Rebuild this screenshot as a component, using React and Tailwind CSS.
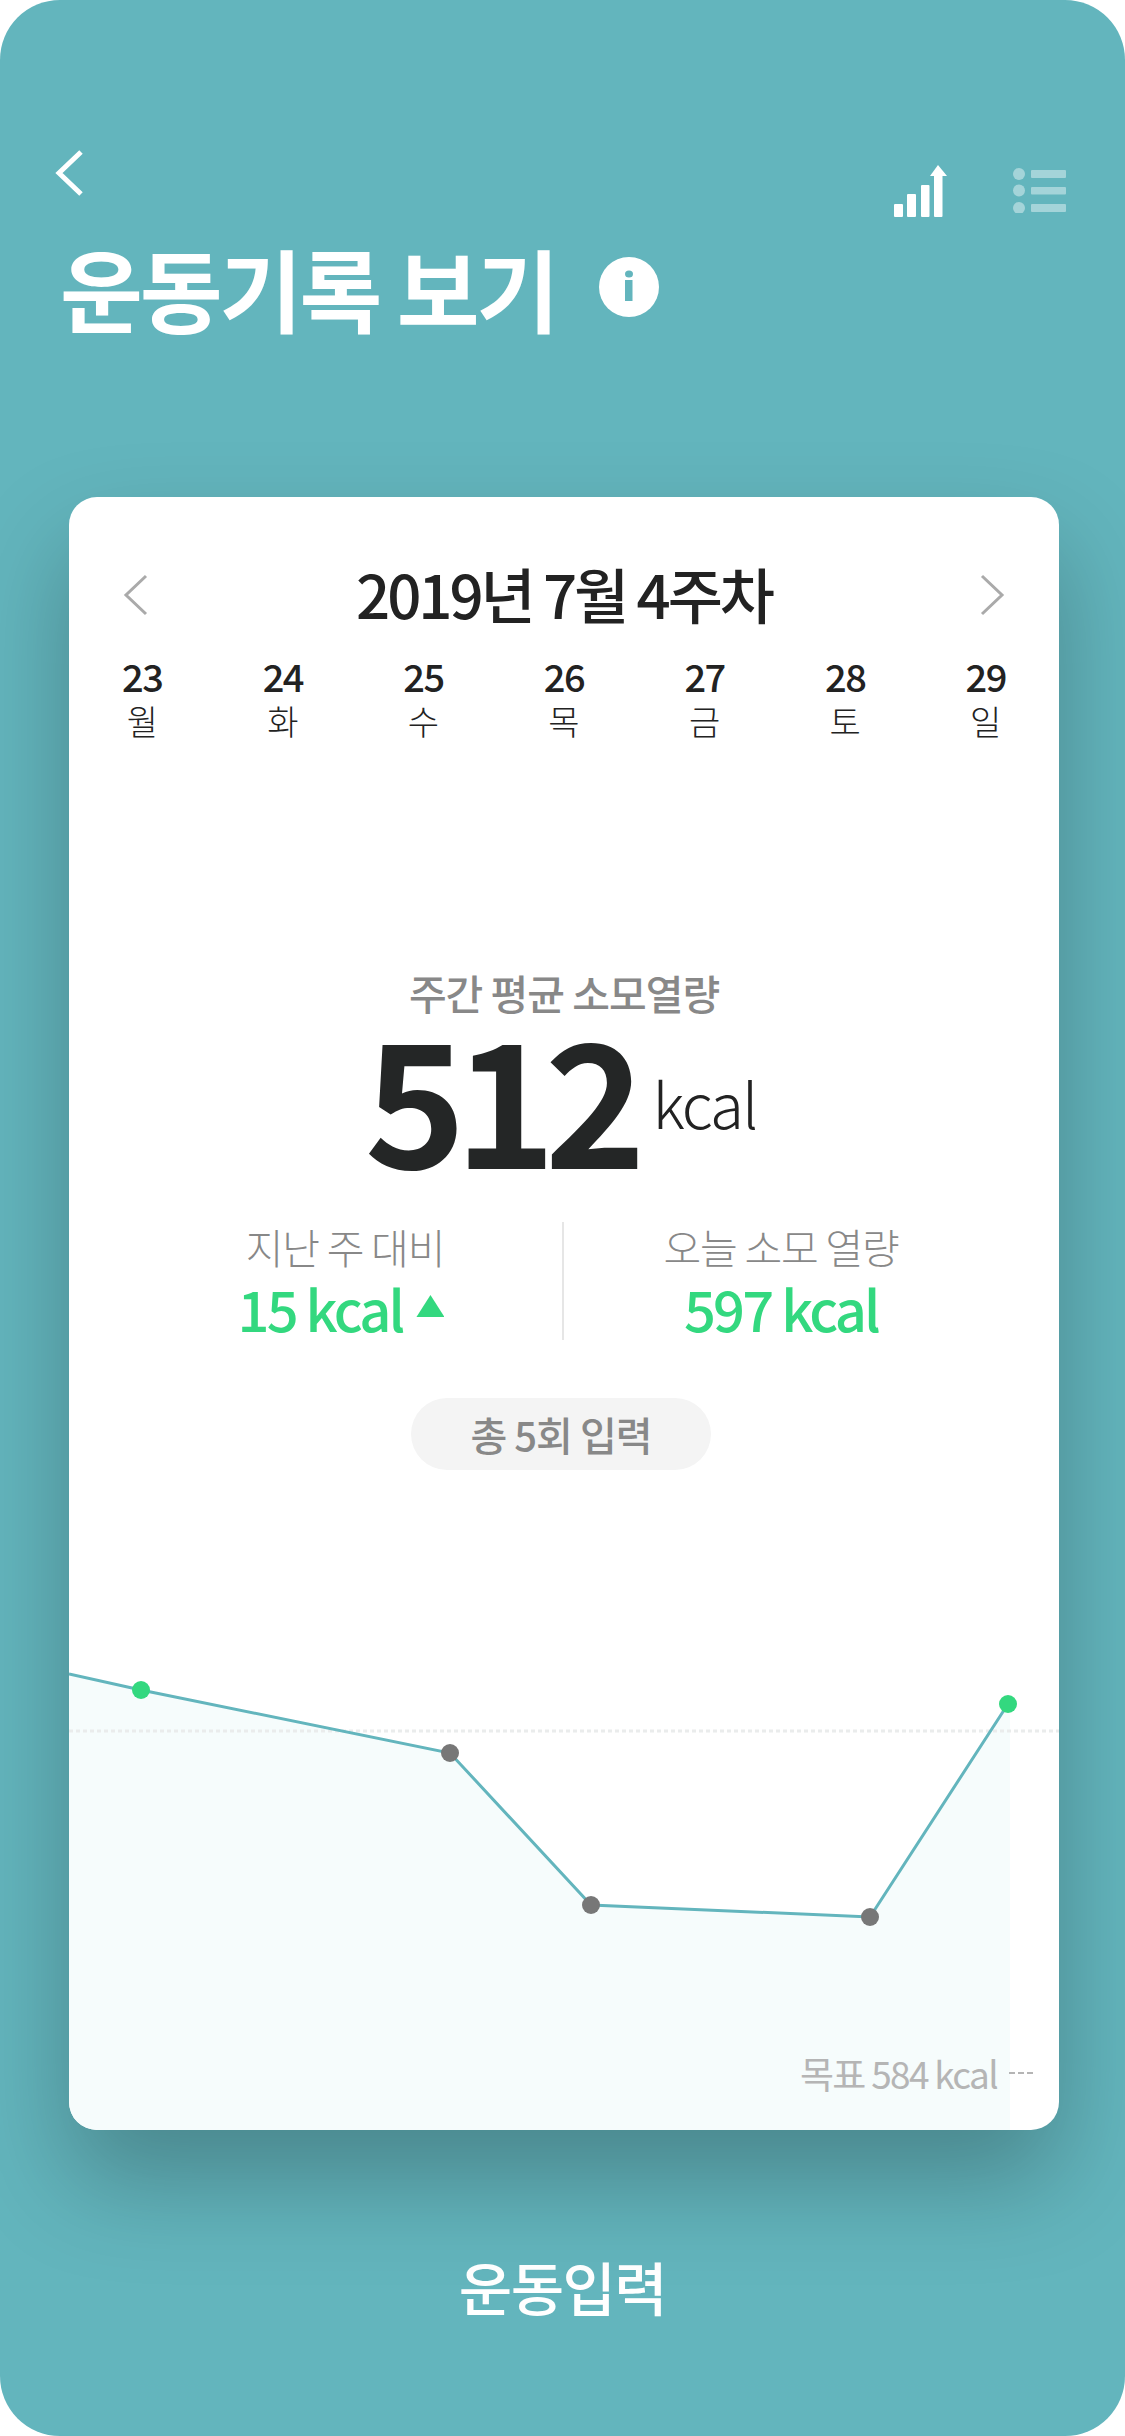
const FONT = "font-['Noto_Sans_CJK_KR','Noto_Sans',sans-serif]";

const days = [
  ["23", "월"], ["24", "화"], ["25", "수"], ["26", "목"], ["27", "금"], ["28", "토"], ["29", "일"],
];

function Chevron({ dir = "left", className = "" }) {
  return (
    <svg width="25" height="42" viewBox="0 0 25 42" fill="none" stroke="currentColor" strokeWidth="3" className={className}>
      <path d={dir === "left" ? "M23 2 L3 21 L23 40" : "M2 2 L22 21 L2 40"} />
    </svg>
  );
}

function Chart() {
  const pts = [[72, 20], [381, 83], [522, 235], [801, 247], [939, 34]];
  const line = `M0 4 L${pts.map((p) => p.join(" ")).join(" L")}`;
  return (
    <svg width="990" height="460" viewBox="0 0 990 460" className="block">
      <path d={`M0 4 L72 20 L381 83 L522 235 L801 247 L941 30 L941 460 L0 460 Z`} fill="#f6fcfc" />
      <path d="M0 61 H990" stroke="#eaecec" strokeWidth="3" strokeDasharray="4 3" />
      <path d={line} fill="none" stroke="#63b5bd" strokeWidth="3" />
      <circle cx="72" cy="20" r="9" fill="#33d87f" />
      <circle cx="381" cy="83" r="9" fill="#777777" />
      <circle cx="522" cy="235" r="9" fill="#777777" />
      <circle cx="801" cy="247" r="9" fill="#777777" />
      <circle cx="939" cy="34" r="9" fill="#33d87f" />
    </svg>
  );
}

export default function App() {
  return (
    <div className={`w-[1125px] h-[2436px] bg-[#63b5bd] rounded-[60px] flex flex-col items-center overflow-hidden ${FONT}`}>
      <div className="w-full h-[497px] px-[55px] pt-[150px] flex flex-col shrink-0">
        <div className="flex justify-between items-start h-[45px]">
          <svg width="28" height="46" viewBox="0 0 28 46" fill="none" stroke="#ffffff" strokeWidth="5">
            <path d="M26 2 L4 23 L26 44" />
          </svg>
          <div className="flex items-start gap-[66px] pr-[3px] pt-[15px]">
            <svg width="54" height="54" viewBox="0 0 54 54" fill="#ffffff">
              <rect x="1" y="39" width="9" height="13" rx="1" />
              <rect x="14" y="29" width="9" height="23" rx="1" />
              <rect x="28" y="20" width="8.5" height="32" rx="1" />
              <rect x="41" y="10" width="8.5" height="42" rx="1" />
              <path d="M45 0 L54 11 H37 Z" />
            </svg>
            <svg width="54" height="48" viewBox="0 0 54 48" fill="#ffffff" fillOpacity="0.42">
              <circle cx="6" cy="9" r="6" />
              <circle cx="6" cy="25.5" r="6" />
              <circle cx="6" cy="43" r="6" />
              <rect x="18" y="5" width="35" height="8" rx="1" />
              <rect x="18" y="22" width="35" height="7.5" rx="1" />
              <rect x="18" y="39" width="35" height="8" rx="1" />
            </svg>
          </div>
        </div>
        <div className="flex items-center h-[96px] mt-[44px] pl-[5px]">
          <h1 className="text-[90px] leading-[96px] font-bold text-white tracking-[-3px] whitespace-nowrap">운동기록 보기</h1>
          <svg width="60" height="60" viewBox="0 0 60 60" className="ml-[43px]">
            <circle cx="30" cy="30" r="30" fill="#ffffff" />
            <ellipse cx="30" cy="17" rx="4" ry="3.5" fill="#63b5bd" />
            <rect x="26" y="23" width="7.5" height="21" fill="#63b5bd" />
          </svg>
        </div>
      </div>

      <div className="relative ml-[3px] w-[990px] h-[1633px] shrink-0 bg-white rounded-[28px] shadow-[0_50px_100px_0_rgba(0,0,0,0.26)] flex flex-col">
        <div className="flex items-center justify-between px-[54px] pt-[63px] h-[129px] text-[#aaaaaa]">
          <Chevron dir="left" className="mt-[3px]" />
          <span className="text-[60px] leading-[64px] font-medium text-[#222222] tracking-[-3.1px] whitespace-nowrap">2019년 7월 4주차</span>
          <Chevron dir="right" className="mt-[3px]" />
        </div>
        <div className="grid grid-cols-7 px-[3px] mt-[28px]">
          {days.map(([n, d]) => (
            <div key={n} className="flex flex-col items-center text-[#222222]">
              <span className="text-[38px] leading-[44px] font-medium tracking-[-1.5px]">{n}</span>
              <span className="text-[34px] leading-[45px] font-light">{d}</span>
            </div>
          ))}
        </div>

        <div className="flex flex-col items-center mt-[225px]">
          <span className="text-[41px] leading-[48px] font-medium text-[#888888] tracking-[-1px]">주간 평균 소모열량</span>
          <div className="flex items-start h-[170px] mt-[-7px] pr-[7px]">
            <span className="text-[172px] leading-[170px] font-bold text-[#242626] tracking-[-11.5px]">512</span>
            <span className="text-[62px] leading-[70px] font-light text-[#222222] ml-[18px] mt-[58px] tracking-[-2px]">kcal</span>
          </div>
        </div>

        <div className="flex items-stretch justify-center mt-[43px] h-[118px] pr-[2px]">
          <div className="w-[434px] flex flex-col items-center">
            <span className="text-[41px] leading-[48px] font-light text-[#888888] tracking-[-1.2px]">지난 주 대비</span>
            <div className="flex items-center mt-[7px] pr-[8px]">
              <span className="text-[56px] leading-[62px] font-medium text-[#33d87f] tracking-[-2.8px]">15 kcal</span>
              <span className="ml-[14px] mt-[-4px] w-[28px] h-[22px] bg-[#33d87f] [clip-path:polygon(50%_0,100%_100%,0_100%)]" />
            </div>
          </div>
          <div className="w-[2px] bg-[#e6e6e6]" />
          <div className="w-[434px] flex flex-col items-center">
            <span className="text-[41px] leading-[48px] font-light text-[#888888] tracking-[-1.2px]">오늘 소모 열량</span>
            <span className="mt-[7px] text-[56px] leading-[62px] font-medium text-[#33d87f] tracking-[-2.8px]">597 kcal</span>
          </div>
        </div>

        <div className="flex justify-center mt-[58px] pr-[6px]">
          <span className="w-[300px] h-[72px] rounded-full bg-[#f4f4f4] flex items-center justify-center text-[40px] leading-none font-medium text-[#888888] tracking-[-1px]">총 5회 입력</span>
        </div>

        <div className="relative mt-auto h-[460px] overflow-hidden rounded-b-[28px]">
          <Chart />
          <div className="absolute right-[26px] bottom-[35px] flex items-center gap-[12px] text-[#b5b5b5]">
            <span className="text-[37px] leading-[44px] font-normal tracking-[-1.7px]">목표 584 kcal</span>
            <span className="w-[24px] border-t-2 border-dashed border-[#b5b5b5]" />
          </div>
        </div>
      </div>

      <div className="flex-1 flex items-start justify-center pt-[120px]">
        <span className="text-[58px] leading-[72px] font-medium text-white tracking-[-1.5px]">운동입력</span>
      </div>
    </div>
  );
}
